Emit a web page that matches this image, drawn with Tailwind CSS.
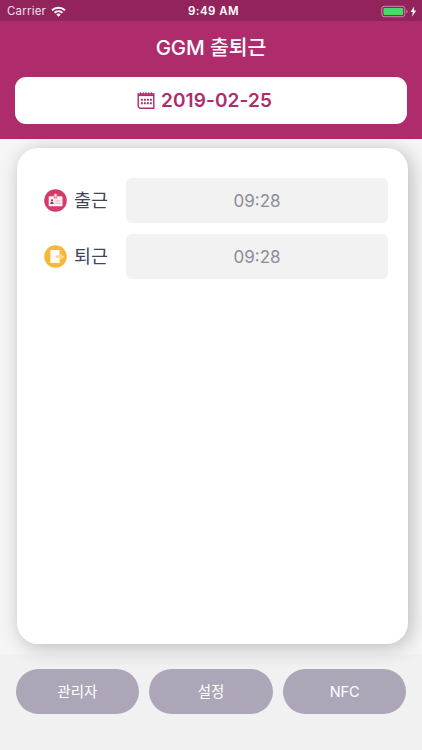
<!DOCTYPE html>
<html lang="ko">
<head>
<meta charset="utf-8">
<meta name="viewport" content="width=device-width, initial-scale=1">
<title>GGM 출퇴근</title>
<script src="https://cdn.jsdelivr.net/npm/@tailwindcss/browser@4"></script>
</head>
<body class="flex h-[750px] w-[422px] flex-col overflow-hidden bg-[#f1f1f1] font-['Inter','Noto_Sans_CJK_KR',sans-serif]">
  <header class="z-10 flex h-[139px] shrink-0 flex-col bg-[#ae2c6b] text-white">
    <div class="grid h-[21px] grid-cols-3 items-center bg-[#92245b] pr-[4px] pl-[7px] text-[11.5px] leading-[21px]">
      <div class="flex items-center gap-[5px] text-[#f8dfec]">
        <span class="pt-[1px] tracking-[0.2px]">Carrier</span>
        <svg class="h-[11px] w-[15px]" viewBox="0 0 15 11" fill="none" stroke="#fff" stroke-width="2">
          <path d="M1 4.3C4.7.8 10.3.8 14 4.3"/>
          <path d="M3.5 6.8c2.3-2.1 5.7-2.1 8 0"/>
          <path d="M7.5 10.8 5.3 8.6a3.1 3.1 0 0 1 4.4 0z" fill="#fff" stroke="none"/>
        </svg>
      </div>
      <div class="pt-[1px] pl-[2px] text-center font-semibold tracking-[0.45px]">9:49 AM</div>
      <svg class="h-[13px] w-[37px] justify-self-end" viewBox="0 0 37 13">
        <rect x=".8" y="1.3" width="23" height="10.4" rx="2.4" fill="none" stroke="#c98bac" stroke-width="1"/>
        <rect x="2.5" y="3" width="19.6" height="7" rx="1" fill="#4cd964"/>
        <path d="M25.3 4.8c1.7.5 1.7 2.9 0 3.4z" fill="#c98bac"/>
        <path d="M33.3 1.3 29.6 7h2.3l-.9 4.7L35.2 5.6h-2.5z" fill="#fff"/>
      </svg>
    </div>
    <h1 class="flex h-[56px] items-center justify-center pb-[1px] text-[20.5px] font-medium tracking-[-0.1px]">GGM 출퇴근</h1>
    <div class="mx-[15px] flex h-[47px] items-center justify-center gap-[6px] rounded-[11px] bg-white pr-[13px] text-[#ae2c6b]">
      <svg class="h-[18px] w-[18px]" viewBox="0 0 18 18" fill="none" stroke="#ae2c6b">
        <path d="M1.2 2h15.6v14.3H3.7a2.5 2.5 0 0 1-2.5-2.5z" stroke-width="1.4"/>
        <path d="M1.2 3.3h15.6" stroke-width="1.6"/>
        <path d="M3.5 .3v3M6.2 .3v3M9 .3v3M11.8 .3v3M14.5 .3v3" stroke-width="1.1"/>
        <path d="M3.9 7.8h11M3.9 11.3h11" stroke-width="2" stroke-dasharray="1.9 1.1"/>
      </svg>
      <span class="pt-[2px] text-[19px] font-semibold tracking-[0.1px]">2019-02-25</span>
    </div>
  </header>

  <main class="h-[515px] shrink-0 bg-[#f6f6f6] px-[17px] pt-[9px] pr-[14px]">
    <section class="flex h-[496px] flex-col gap-[11px] rounded-[21px] bg-white pt-[30px] pr-[20px] pl-[27px] shadow-[3px_3px_20px_rgba(0,0,0,0.25)]">
      <div class="flex h-[45px] items-center">
        <svg class="h-[23px] w-[23px]" viewBox="0 0 23 23">
          <circle cx="11.5" cy="11.5" r="11.3" fill="#d33b68"/>
          <rect x="4.7" y="7.2" width="13.8" height="10" rx=".8" fill="#fff2f6"/>
          <path d="M9.7 5h3.6v4.5H9.7z" fill="#e88aa6"/>
          <path d="M10.7 4.8h1.6v3.2h-1.6z" fill="#fbe0e9"/>
          <circle cx="8" cy="11.4" r="1.1" fill="#a83251"/>
          <path d="M6.3 15v-.9c0-1.6 3.4-1.6 3.4 0v.9z" fill="#a83251"/>
          <path d="M11.3 12h5.2M11.3 14.2h5.2" stroke="#efa4ba" stroke-width="1"/>
        </svg>
        <span class="ml-[7px] w-[52px] text-[18.5px] text-[#40465a]">출근</span>
        <div class="flex h-[45px] flex-1 items-center justify-center rounded-[6px] bg-[#f2f2f2] pt-[2px] text-[17px] text-[#8d8c98]">09:28</div>
      </div>
      <div class="flex h-[45px] items-center">
        <svg class="h-[23px] w-[23px]" viewBox="0 0 23 23">
          <circle cx="11.5" cy="11.5" r="11.3" fill="#f5b935"/>
          <rect x="6.4" y="5" width="9.2" height="13" rx=".5" fill="#fffdf5"/>
          <path d="M11.8 10.3h4.4V8.6l4.4 3.1-4.4 3.1v-1.7h-4.4z" fill="#fbd98a"/>
        </svg>
        <span class="ml-[7px] w-[52px] text-[18.5px] text-[#40465a]">퇴근</span>
        <div class="flex h-[45px] flex-1 items-center justify-center rounded-[6px] bg-[#f2f2f2] pt-[2px] text-[17px] text-[#8d8c98]">09:28</div>
      </div>
    </section>
  </main>

  <nav class="grid grid-cols-3 gap-[10px] px-[15.5px] pt-[15px] text-[14.5px] text-white">
    <button class="h-[45px] rounded-full bg-[#ada6b8]">관리자</button>
    <button class="h-[45px] rounded-full bg-[#ada6b8]">설정</button>
    <button class="h-[45px] rounded-full bg-[#ada6b8] tracking-[-0.1px]">NFC</button>
  </nav>
</body>
</html>
